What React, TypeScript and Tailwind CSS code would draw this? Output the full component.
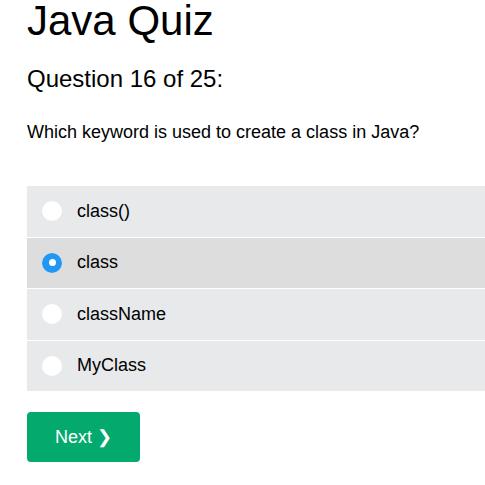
import React from "react";

const options = ["class()", "class", "className", "MyClass"];

export default function App() {
  const selected = 1;
  return (
    <div className="min-h-[485px] bg-white pl-[27px] text-black" style={{ fontFamily: '"Liberation Sans", Arial, sans-serif' }}>
      <h1 className="-mt-[3px] text-[42px] leading-[48px]">Java Quiz</h1>
      <h2 className="mt-[20px] text-[24px] leading-[28px]">Question 16 of 25:</h2>
      <p className="mt-[29px] text-[18px] leading-[20px]">Which keyword is used to create a class in Java?</p>
      <div className="mt-[44px] flex flex-col gap-px">
        {options.map((o, i) => (
          <div
            key={o}
            className={`flex h-[50.5px] items-center ${i === selected ? "bg-[#dddddd]" : "bg-[#e7e9eb]"}`}
          >
            <div className="ml-[15px] flex h-[20px] w-[20px] items-center justify-center rounded-full bg-white">
              {i === selected && (
                <div className="flex h-[20px] w-[20px] items-center justify-center rounded-full bg-[#2196f3]">
                  <div className="h-[7px] w-[7px] rounded-full bg-white" />
                </div>
              )}
            </div>
            <span className="ml-[15px] text-[18px]">{o}</span>
          </div>
        ))}
      </div>
      <button className="mt-[21px] h-[50px] w-[113px] rounded-[4px] bg-[#04aa6d] text-[18px] text-white">
        Next ❯
      </button>
    </div>
  );
}
